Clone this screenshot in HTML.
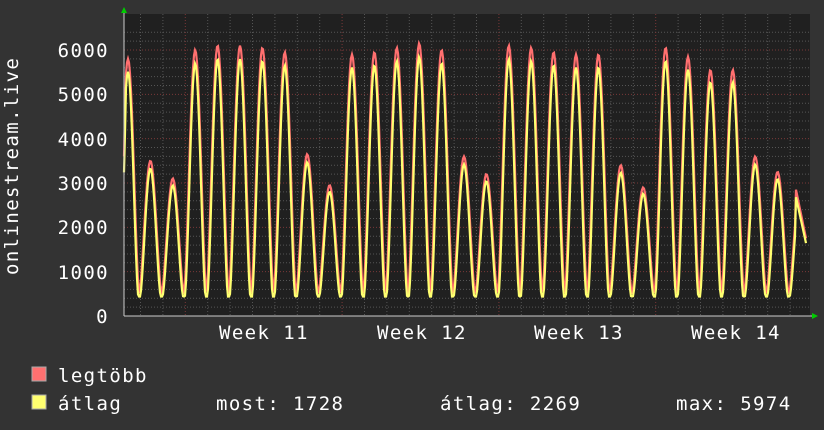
<!DOCTYPE html>
<html><head><meta charset="utf-8"><style>
body{margin:0;width:824px;height:430px;background:#333333;overflow:hidden;font-family:"DejaVu Sans Mono","Liberation Mono",monospace;color:#fff}
svg{position:absolute;left:0;top:0}
</style></head><body>
<svg id="g" width="824" height="430" xmlns="http://www.w3.org/2000/svg" font-family="DejaVu Sans Mono, Liberation Mono, monospace" font-size="19" letter-spacing="1.4" fill="#fff">
<rect x="124" y="14" width="686" height="302" fill="#202020"/>
<g id="grid"></g>
<g text-anchor="end">
<text x="109" y="57">6000</text><text x="109" y="101">5000</text><text x="109" y="146">4000</text>
<text x="109" y="190">3000</text><text x="109" y="234">2000</text><text x="109" y="279">1000</text><text x="109" y="323">0</text>
</g>
<g>
<text x="219" y="339">Week 11</text><text x="377" y="339">Week 12</text><text x="534" y="339">Week 13</text><text x="691" y="339">Week 14</text>
</g>
<text transform="translate(18,275) rotate(-90)">onlinestream.live</text>
<path id="red" fill="none" stroke="#ff6f6f" stroke-width="2.2"/>
<path id="yel" fill="none" stroke="#ffff70" stroke-width="2.2"/>
<line x1="124" y1="316" x2="814" y2="316" stroke="#ccc" stroke-width="1"/>
<line x1="124" y1="12" x2="124" y2="316" stroke="#ccc" stroke-width="1"/>
<polygon points="121,13 127,13 124,7" fill="#0c0"/>
<polygon points="812,313 812,319 818,316" fill="#0c0"/>
<rect x="32" y="367" width="14" height="14" fill="#ff7070" stroke="#aaa" stroke-width="1"/>
<rect x="32" y="395" width="14" height="14" fill="#ffff70" stroke="#aaa" stroke-width="1"/>
<text x="58" y="382">legtöbb</text>
<text x="58" y="410">átlag</text>
<text x="216" y="410">most: 1728</text>
<text x="440" y="410">átlag: 2269</text>
<text x="676" y="410">max: 5974</text>
</svg>
<script>
var g=document.getElementById('grid'),s='';
function Y(v){return 316-v*0.04433;}
for(var v=200;v<=6500;v+=200){var y=Y(v);if(y<14)break;var maj=v%1000==0;
s+='<line x1="124" x2="810" y1="'+y+'" y2="'+y+'" stroke="'+(maj?'#7a3838':'#555')+'" stroke-dasharray="1,2"/>';}
for(var x=140.5;x<810;x+=22.4){var maj=Math.abs(((x-185)/156.8)-Math.round((x-185)/156.8))<0.05;
s+='<line y1="14" y2="316" x1="'+x+'" x2="'+x+'" stroke="'+(maj?'#7a3838':'#555')+'" stroke-dasharray="1,2"/>';}
g.innerHTML=s;
var P=[5800,3500,3100,6000,6100,6100,6050,5950,3650,2950,5900,5950,6050,6150,6000,3600,3200,6100,6050,5950,5900,5900,3400,2900,6050,5850,5550,5550,3600,3250,2850];
function val(x,sc,mn,pm){var k=(x-128)/22.4,i=Math.round(k);if(i<0)i=0;if(i>=P.length)i=P.length-1;
var d=(x-128-i*22.4)/22.4*sc;var c=Math.max(0,Math.cos(Math.PI*Math.min(0.5,Math.abs(d))));
var f=Math.pow(c,1.6);return mn+(P[i]*pm-mn)*f;}
var r='',a='';
for(var x=124;x<=806;x+=1){var rv=val(x,1.0,500,1),av=val(x,1.08,440,0.95);
if(x>=796){var t=(x-796)/10;rv=2850-t*1100;av=rv*0.94;}
if(x<126){rv=3600+(x-124)*1000;av=rv*0.9;}
r+=(x==124?'M':'L')+x+' '+Y(rv).toFixed(1);a+=(x==124?'M':'L')+x+' '+Y(av).toFixed(1);}
document.getElementById('red').setAttribute('d',r);document.getElementById('yel').setAttribute('d',a);
</script>
</body></html>
